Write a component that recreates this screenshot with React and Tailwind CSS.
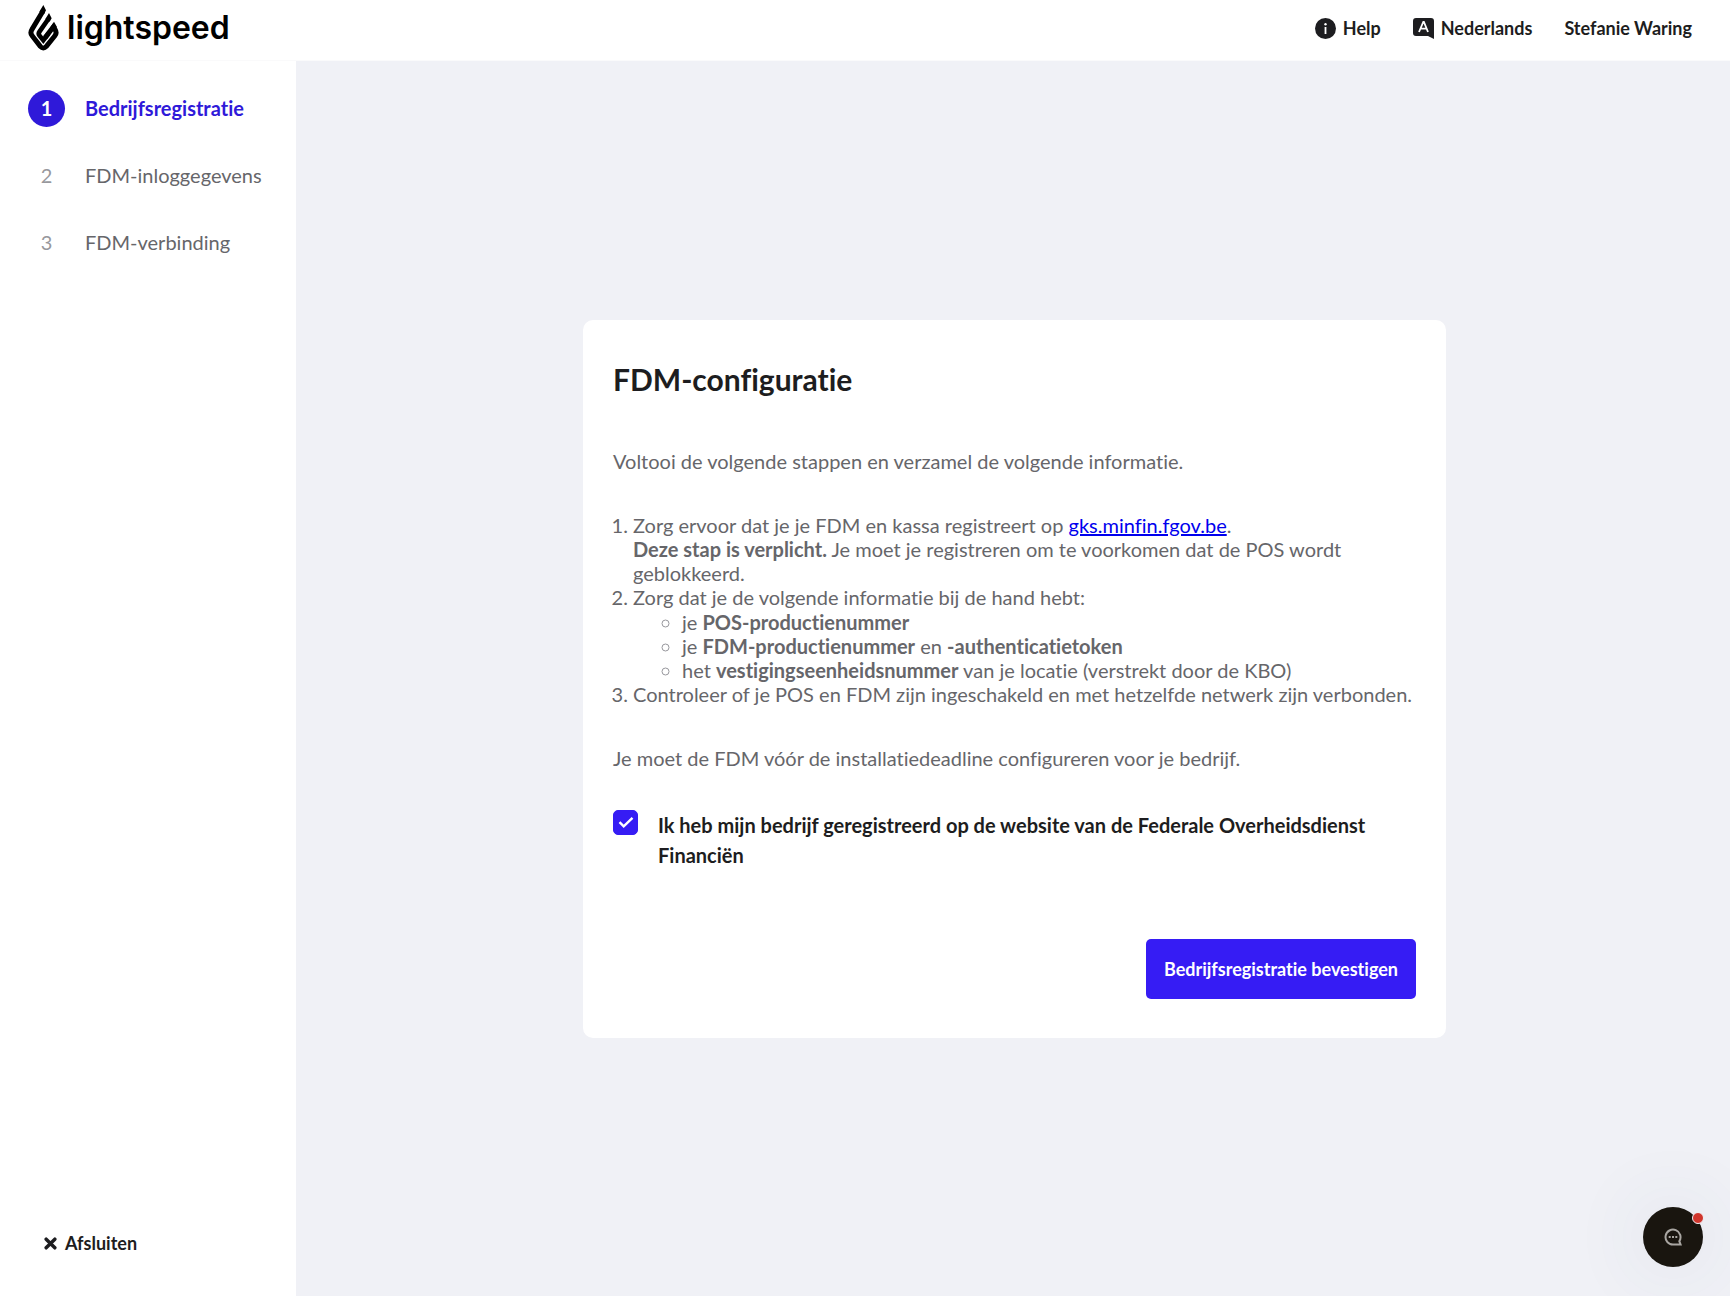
import React, { useState } from 'react';

const steps = ['Bedrijfsregistratie', 'FDM-inloggegevens', 'FDM-verbinding'];

const Logo = () => (
  <a href="#home" aria-label="lightspeed" className="flex items-center gap-2 text-black">
    <svg className="w-[31px] h-[47px]" viewBox="0 0 93 141" fill="none" stroke="currentColor" strokeWidth="15">
      <path d="M45 18L12 73Q5 84 13 93L37 124Q46 134 55 124L80 93Q88 84 81 73L76 66L51 98" />
      <path d="M61 42L35 79Q30 86 34 91L46 106L62 85" strokeWidth="14" />
      {/* pointed ends of the three flame bands */}
      <path d="M46 0L54 16L48 28L34 20ZM63 24L71 40L65 50L52 42ZM78 50L87 66L80 76L66 68Z" fill="currentColor" stroke="none" />
    </svg>
    <span className="font-[Inter] font-semibold text-[32px] leading-10">lightspeed</span>
  </a>
);

const Header = () => (
  <header className="flex items-center justify-between h-[61px] pl-7 pr-[38px] pb-1 border-b border-[#fafafb]">
    <Logo />
    <nav className="flex items-center gap-8 text-[18px] leading-6 font-bold">
      <button type="button" className="flex items-center gap-[7px]">
        <svg className="w-[21px] h-[21px]" viewBox="0 0 21 21">
          <circle cx="10.5" cy="10.5" r="10.5" fill="#1d1d20" />
          <circle cx="10.5" cy="6.3" r="1.2" fill="#fff" />
          <path d="M10.5 9v7" stroke="#fff" strokeWidth="1.8" />
        </svg>
        Help
      </button>
      <button type="button" className="flex items-center gap-[7px]">
        <svg className="w-[21px] h-[21px]" viewBox="0 0 21 21">
          <path d="M3 0h15a3 3 0 0 1 3 3v18l-6-3H3a3 3 0 0 1-3-3V3a3 3 0 0 1 3-3z" fill="#1d1d20" />
          <path d="M6 14l4.3-10h.6L15 14M7.5 10.6h6" stroke="#fff" strokeWidth="1.8" fill="none" />
        </svg>
        Nederlands
      </button>
      <button type="button">Stefanie Waring</button>
    </nav>
  </header>
);

const Sidebar = () => (
  <aside className="flex flex-col justify-between w-[296px] shrink-0 px-7 pt-[29px] pb-[41px]">
    <ol className="flex flex-col gap-[30px] text-[20px] leading-6">
      {steps.map((step, index) => {
        const active = index === 0;
        return (
          <li key={step} className="flex items-center gap-5">
            <span
              className={
                active
                  ? 'flex items-center justify-center w-[37px] h-[37px] pb-0.5 rounded-full bg-[#2f19d9] text-white font-bold'
                  : 'flex items-center justify-center w-[37px] h-[37px] pb-0.5 text-[#98989d]'
              }
            >
              {index + 1}
            </span>
            <span className={active ? 'pb-0.5 text-[#2f19d9] font-bold' : 'pb-0.5 text-[#66666a]'}>{step}</span>
          </li>
        );
      })}
    </ol>
    <button type="button" className="flex items-center gap-2 pl-4 text-[18px] leading-6 font-bold">
      <svg className="w-[13px] h-[13px]" viewBox="0 0 12 12" stroke="currentColor" strokeWidth="3.2" strokeLinecap="round">
        <path d="M2 2l8 8M10 2l-8 8" />
      </svg>
      Afsluiten
    </button>
  </aside>
);

const SetupCard = () => {
  const [registered, setRegistered] = useState(true);

  return (
    <section className="w-[863px] px-[30px] py-[39px] rounded-[10px] bg-white text-[20px] leading-6 text-[#66666a]">
      <h1 className="text-[30px] leading-10 font-bold text-[#1d1d20]">FDM-configuratie</h1>
      <p className="mt-[50px]">Voltooi de volgende stappen en verzamel de volgende informatie.</p>
      <ol className="mt-10 pl-5 list-decimal">
        <li>
          Zorg ervoor dat je je FDM en kassa registreert op{' '}
          <a href="https://gks.minfin.fgov.be" className="text-[#0000ee] underline">gks.minfin.fgov.be</a>.
          <br />
          <strong>Deze stap is verplicht.</strong> Je moet je registreren om te voorkomen dat de POS wordt geblokkeerd.
        </li>
        <li>
          Zorg dat je de volgende informatie bij de hand hebt:
          <ul className="mt-px pl-[49px] list-[circle] marker:text-[#98989d]">
            <li>je <strong>POS-productienummer</strong></li>
            <li>je <strong>FDM-productienummer</strong> en <strong>-authenticatietoken</strong></li>
            <li>het <strong>vestigingseenheidsnummer</strong> van je locatie (verstrekt door de KBO)</li>
          </ul>
        </li>
        <li>Controleer of je POS en FDM zijn ingeschakeld en met hetzelfde netwerk zijn verbonden.</li>
      </ol>
      <p className="mt-10">Je moet de FDM vóór de installatiedeadline configureren voor je bedrijf.</p>
      <div className="grid grid-cols-[25px_1fr] items-start gap-5 mt-10">
        <span className="grid">
          <input
            id="registered"
            type="checkbox"
            checked={registered}
            onChange={(e) => setRegistered(e.target.checked)}
            className="peer col-start-1 row-start-1 appearance-none w-[25px] h-[25px] rounded-[5px] border border-[#98989d] checked:border-[#361cf4] checked:bg-[#361cf4]"
          />
          <svg
            className="col-start-1 row-start-1 w-[25px] h-[25px] pointer-events-none opacity-0 peer-checked:opacity-100"
            viewBox="0 0 25 25"
            fill="none"
            stroke="#fff"
            strokeWidth="2.4"
          >
            <path d="M6.5 12.2l4.2 4.2L19.500 7.800" />
          </svg>
        </span>
        <label htmlFor="registered" className="leading-[30px] font-bold text-[#1d1d20]">
          Ik heb mijn bedrijf geregistreerd op de website van de Federale Overheidsdienst Financiën
        </label>
      </div>
      <div className="flex justify-end mt-[69px]">
        <button type="button" className="h-[60px] px-[18px] rounded-[5px] bg-[#361cf4] text-[18px] font-bold text-white">
          Bedrijfsregistratie bevestigen
        </button>
      </div>
    </section>
  );
};

const ChatButton = () => (
  <button
    type="button"
    aria-label="Chat"
    className="fixed right-[27px] bottom-[29px] flex items-center justify-center w-[60px] h-[60px] rounded-full bg-[#19150f] shadow-[0_0_80px_rgba(60,80,120,0.12)]"
  >
    <svg className="w-[18px] h-[18px]" viewBox="0 0 18 18" fill="none" stroke="#a9a6a2" strokeWidth="2">
      <path d="M16.6 16.6H9a7.5 7.5 0 1 1 6.3-3.4z" />
      <path d="M4.7 9h2M8 9h2M11.3 9h2" strokeWidth="2.2" />
    </svg>
    <span className="absolute top-[5px] -right-px w-3 h-3 rounded-full border border-[#f0f1f6] bg-[#d0352c]" />
  </button>
);

const App = () => (
  <div className="flex flex-col min-h-screen bg-white font-[Lato,sans-serif] text-[#1d1d20] [font-variant-ligatures:no-common-ligatures]">
    <Header />
    <div className="flex flex-1">
      <Sidebar />
      <main className="flex flex-1 items-center justify-center pt-px pl-[3px] bg-[#f0f1f6]">
        <SetupCard />
      </main>
    </div>
    <ChatButton />
  </div>
);

export default App;
